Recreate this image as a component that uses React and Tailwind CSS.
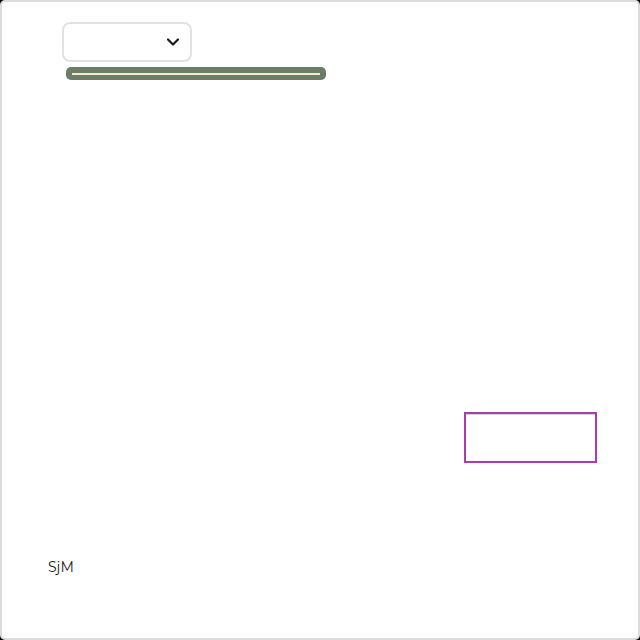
import React from 'react';

const App = () => {
  return (
    <div className="w-[640px] h-[640px] bg-black" style={{ fontFamily: '"Open Sans", "Noto Sans", sans-serif' }}>
      <div className="w-full h-full bg-white border-2 border-[#dcdcdc] rounded-[5px] flex flex-col pl-[60px] pr-[41px] pt-[20px]">
        <div className="w-[130px] h-[40px] border-2 border-[#e2e2e2] rounded-[8px] flex items-center justify-end pr-[10px]">
          <svg width="14" height="10" viewBox="0 0 14 10" fill="none">
            <path d="M2 2.5L7 7.5L12 2.5" stroke="#1a1a1a" strokeWidth="2.2" strokeLinecap="round" strokeLinejoin="round" />
          </svg>
        </div>
        <div className="ml-[4px] mt-[5px] w-[260px] h-[13px] bg-[#6b7d64] rounded-[5px] flex items-center px-[6px]">
          <div className="w-full h-[2px] bg-[#f3e9d2]" />
        </div>
        <div className="self-end mt-[332px] w-[133px] h-[51px] border-2 border-[#a83db0] shadow-[inset_0_1px_0_#d6d6d6]" />
        <div className="-ml-[14px] mt-[94px] text-[14px] text-[#222] leading-[20px]" style={{ fontFamily: 'Montserrat, "Noto Sans", sans-serif' }}>
          SjM
        </div>
      </div>
    </div>
  );
};

export default App;
